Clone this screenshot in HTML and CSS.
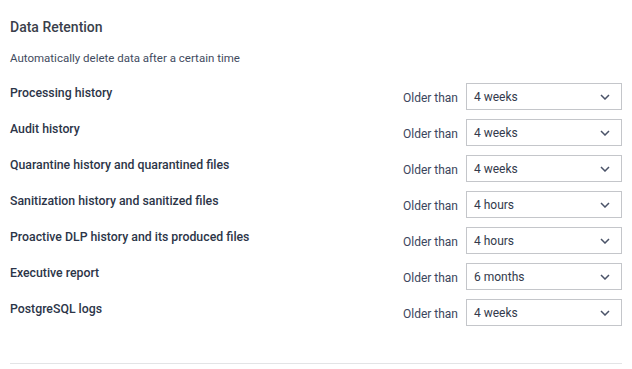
FILE: index.html
```html
<!DOCTYPE html>
<html lang="en">
<head>
    <meta charset="UTF-8">
    <meta name="viewport" content="width=device-width, initial-scale=1.0">
    <title>Data Retention</title>
    <link rel="stylesheet" href="styles.css">
</head>
<body>

    <div class="section">
        <h2>Data Retention</h2>
        <p class="hint">Automatically delete data after a certain time</p>

        <div class="rows">
            <div class="row">
                <span class="label">Processing history</span>
                <span class="older">Older than</span>
                <div class="select"><span>4 weeks</span><svg width="10" height="6" viewBox="0 0 10 6"><path d="M1 1l4 4 4-4" fill="none" stroke="#4a5368" stroke-width="1.5"/></svg></div>
            </div>
            <div class="row">
                <span class="label">Audit history</span>
                <span class="older">Older than</span>
                <div class="select"><span>4 weeks</span><svg width="10" height="6" viewBox="0 0 10 6"><path d="M1 1l4 4 4-4" fill="none" stroke="#4a5368" stroke-width="1.5"/></svg></div>
            </div>
            <div class="row">
                <span class="label">Quarantine history and quarantined files</span>
                <span class="older">Older than</span>
                <div class="select"><span>4 weeks</span><svg width="10" height="6" viewBox="0 0 10 6"><path d="M1 1l4 4 4-4" fill="none" stroke="#4a5368" stroke-width="1.5"/></svg></div>
            </div>
            <div class="row">
                <span class="label">Sanitization history and sanitized files</span>
                <span class="older">Older than</span>
                <div class="select"><span>4 hours</span><svg width="10" height="6" viewBox="0 0 10 6"><path d="M1 1l4 4 4-4" fill="none" stroke="#4a5368" stroke-width="1.5"/></svg></div>
            </div>
            <div class="row">
                <span class="label">Proactive DLP history and its produced files</span>
                <span class="older">Older than</span>
                <div class="select"><span>4 hours</span><svg width="10" height="6" viewBox="0 0 10 6"><path d="M1 1l4 4 4-4" fill="none" stroke="#4a5368" stroke-width="1.5"/></svg></div>
            </div>
            <div class="row">
                <span class="label">Executive report</span>
                <span class="older">Older than</span>
                <div class="select"><span>6 months</span><svg width="10" height="6" viewBox="0 0 10 6"><path d="M1 1l4 4 4-4" fill="none" stroke="#4a5368" stroke-width="1.5"/></svg></div>
            </div>
            <div class="row">
                <span class="label">PostgreSQL logs</span>
                <span class="older">Older than</span>
                <div class="select"><span>4 weeks</span><svg width="10" height="6" viewBox="0 0 10 6"><path d="M1 1l4 4 4-4" fill="none" stroke="#4a5368" stroke-width="1.5"/></svg></div>
            </div>
        </div>

        <hr class="divider">
    </div>

</body>
</html>
```

FILE: styles.css
```css
body {
    font-family: 'Roboto', 'Liberation Sans', sans-serif;
    margin: 0;
    padding: 0;
    background-color: #fff;
    color: #2f3542;
}

.section {
    padding: 17px 10px 0 10px;
}

.section h2 {
    margin: 0;
    font-size: 14px;
    line-height: 20px;
    font-weight: 500;
    color: #3a3f4b;
}

.hint {
    margin: 13px 0 0 0;
    font-size: 11.5px;
    line-height: 16px;
    color: #3f4b60;
}

.rows {
    margin-top: 17px;
    display: flex;
    flex-direction: column;
    gap: 9px;
}

.row {
    display: flex;
    align-items: center;
    height: 27px;
}

.label {
    flex: 1;
    font-size: 12.3px;
    font-weight: 500;
    color: #2c3548;
    align-self: flex-start;
    line-height: 18px;
    margin-top: 1px;
}

.older {
    font-size: 12px;
    color: #3b465c;
    margin-right: 8px;
    margin-top: 2px;
}

.select {
    width: 156px;
    height: 27px;
    box-sizing: border-box;
    border: 1px solid #c4c6ca;
    display: flex;
    align-items: center;
    justify-content: space-between;
    padding: 0 11px 0 7px;
    font-size: 12px;
    color: #333a4c;
}

.divider {
    border: none;
    border-top: 1px solid #e3e4e6;
    margin: 37px 0 0 0;
}
```
